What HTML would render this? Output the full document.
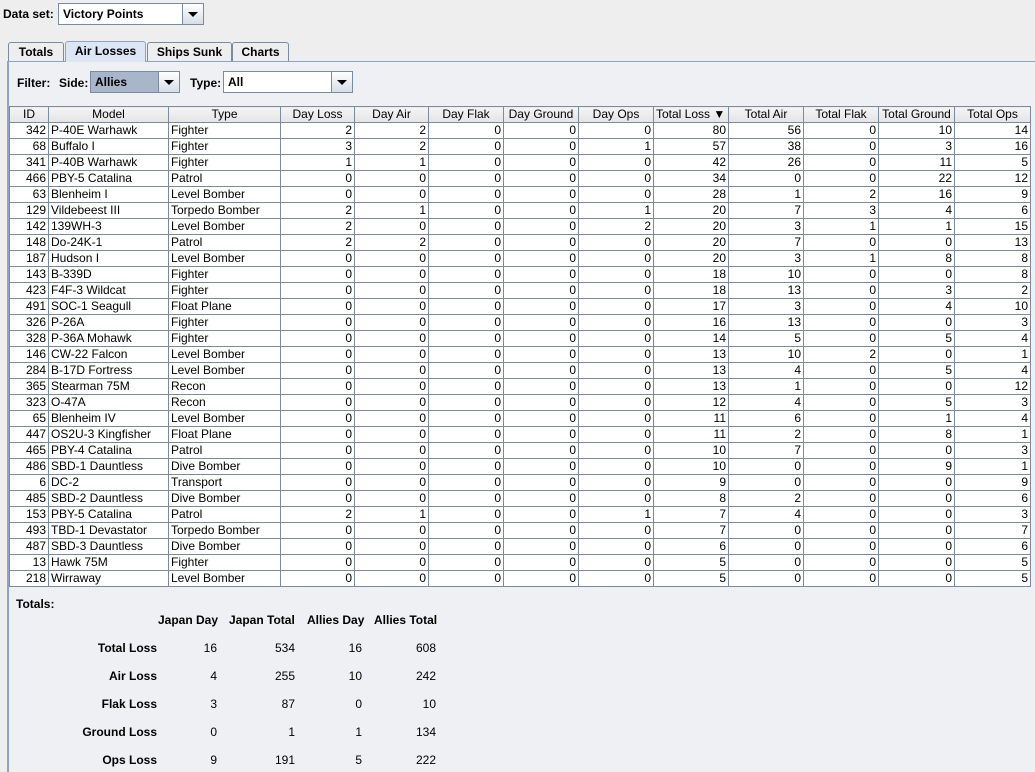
<!DOCTYPE html>
<html><head><meta charset="utf-8"><style>
body{margin:0;width:1035px;height:767px;overflow:hidden;background:#eeeeee;font-family:"Liberation Sans",sans-serif;font-size:12px;color:#000;position:relative}
.a{position:absolute}
.b{font-weight:bold}
.combo{position:absolute;border:1px solid #7a8aa0;background:#fff;height:22px;box-sizing:border-box}
.combo .btn{position:absolute;right:0;top:0;width:20px;height:20px;border-left:1px solid #7a8aa0;background:linear-gradient(#fff,#d8dde6)}
.combo .btn:after{content:"";position:absolute;left:5px;top:8px;border-left:5px solid transparent;border-right:5px solid transparent;border-top:5px solid #000}
.combo span{position:absolute;left:4px;top:3px;font-weight:bold}
.tab{position:absolute;top:42px;height:19px;border:1px solid #7a8aa0;border-bottom:none;border-radius:3px 3px 0 0;background:#eeeeee;font-weight:bold;text-align:center;line-height:18px;box-sizing:border-box}
table{position:absolute;left:9px;top:106px;border-collapse:collapse;table-layout:fixed;background:#fff}
td,th{border:1px solid #7a8aa0;height:15px;padding:0 2px;font-weight:normal;white-space:nowrap;overflow:hidden;line-height:15px;font-size:12px}
th{background:linear-gradient(#f4f4f4,#e4e4e4);text-align:center}
td{text-align:right}
td.l{text-align:left}
.tot{position:absolute;text-align:right;width:60px}
</style></head><body>
<div class="a b" style="left:3px;top:7px">Data set:</div>
<div class="combo" style="left:58px;top:3px;width:146px"><span>Victory Points</span><div class="btn"></div></div>
<div class="a" style="left:7px;top:61px;width:1030px;height:710px;border-left:2px solid #8fa3c8;border-top:1px solid #8fa3c8;background:#eef0f3"></div>
<div class="tab" style="left:8px;width:56px">Totals</div>
<div class="tab" style="left:65px;width:81px;top:41px;height:21px;background:#dce6f4;border-color:#8fa3c8">Air Losses</div>
<div class="tab" style="left:147px;width:85px">Ships Sunk</div>
<div class="tab" style="left:232px;width:57px">Charts</div>
<div class="a b" style="left:17px;top:76px">Filter:</div>
<div class="a b" style="left:59px;top:76px">Side:</div>
<div class="combo" style="left:90px;top:71px;width:90px;background:#a9b5c8"><span>Allies</span><div class="btn"></div></div>
<div class="a b" style="left:190px;top:76px">Type:</div>
<div class="combo" style="left:223px;top:71px;width:130px"><span>All</span><div class="btn"></div></div>
<table>
<colgroup><col style="width:39px"><col style="width:120px"><col style="width:112px"><col style="width:74px"><col style="width:74px"><col style="width:75px"><col style="width:75px"><col style="width:75px"><col style="width:75px"><col style="width:75px"><col style="width:75px"><col style="width:76px"><col style="width:76px"></colgroup>
<tr><th>ID</th><th>Model</th><th>Type</th><th>Day Loss</th><th>Day Air</th><th>Day Flak</th><th>Day Ground</th><th>Day Ops</th><th style="text-align:left">Total Loss &#9660;</th><th>Total Air</th><th>Total Flak</th><th>Total Ground</th><th>Total Ops</th></tr>
<tr><td>342</td><td class="l">P-40E Warhawk</td><td class="l">Fighter</td><td>2</td><td>2</td><td>0</td><td>0</td><td>0</td><td>80</td><td>56</td><td>0</td><td>10</td><td>14</td></tr>
<tr><td>68</td><td class="l">Buffalo I</td><td class="l">Fighter</td><td>3</td><td>2</td><td>0</td><td>0</td><td>1</td><td>57</td><td>38</td><td>0</td><td>3</td><td>16</td></tr>
<tr><td>341</td><td class="l">P-40B Warhawk</td><td class="l">Fighter</td><td>1</td><td>1</td><td>0</td><td>0</td><td>0</td><td>42</td><td>26</td><td>0</td><td>11</td><td>5</td></tr>
<tr><td>466</td><td class="l">PBY-5 Catalina</td><td class="l">Patrol</td><td>0</td><td>0</td><td>0</td><td>0</td><td>0</td><td>34</td><td>0</td><td>0</td><td>22</td><td>12</td></tr>
<tr><td>63</td><td class="l">Blenheim I</td><td class="l">Level Bomber</td><td>0</td><td>0</td><td>0</td><td>0</td><td>0</td><td>28</td><td>1</td><td>2</td><td>16</td><td>9</td></tr>
<tr><td>129</td><td class="l">Vildebeest III</td><td class="l">Torpedo Bomber</td><td>2</td><td>1</td><td>0</td><td>0</td><td>1</td><td>20</td><td>7</td><td>3</td><td>4</td><td>6</td></tr>
<tr><td>142</td><td class="l">139WH-3</td><td class="l">Level Bomber</td><td>2</td><td>0</td><td>0</td><td>0</td><td>2</td><td>20</td><td>3</td><td>1</td><td>1</td><td>15</td></tr>
<tr><td>148</td><td class="l">Do-24K-1</td><td class="l">Patrol</td><td>2</td><td>2</td><td>0</td><td>0</td><td>0</td><td>20</td><td>7</td><td>0</td><td>0</td><td>13</td></tr>
<tr><td>187</td><td class="l">Hudson I</td><td class="l">Level Bomber</td><td>0</td><td>0</td><td>0</td><td>0</td><td>0</td><td>20</td><td>3</td><td>1</td><td>8</td><td>8</td></tr>
<tr><td>143</td><td class="l">B-339D</td><td class="l">Fighter</td><td>0</td><td>0</td><td>0</td><td>0</td><td>0</td><td>18</td><td>10</td><td>0</td><td>0</td><td>8</td></tr>
<tr><td>423</td><td class="l">F4F-3 Wildcat</td><td class="l">Fighter</td><td>0</td><td>0</td><td>0</td><td>0</td><td>0</td><td>18</td><td>13</td><td>0</td><td>3</td><td>2</td></tr>
<tr><td>491</td><td class="l">SOC-1 Seagull</td><td class="l">Float Plane</td><td>0</td><td>0</td><td>0</td><td>0</td><td>0</td><td>17</td><td>3</td><td>0</td><td>4</td><td>10</td></tr>
<tr><td>326</td><td class="l">P-26A</td><td class="l">Fighter</td><td>0</td><td>0</td><td>0</td><td>0</td><td>0</td><td>16</td><td>13</td><td>0</td><td>0</td><td>3</td></tr>
<tr><td>328</td><td class="l">P-36A Mohawk</td><td class="l">Fighter</td><td>0</td><td>0</td><td>0</td><td>0</td><td>0</td><td>14</td><td>5</td><td>0</td><td>5</td><td>4</td></tr>
<tr><td>146</td><td class="l">CW-22 Falcon</td><td class="l">Level Bomber</td><td>0</td><td>0</td><td>0</td><td>0</td><td>0</td><td>13</td><td>10</td><td>2</td><td>0</td><td>1</td></tr>
<tr><td>284</td><td class="l">B-17D Fortress</td><td class="l">Level Bomber</td><td>0</td><td>0</td><td>0</td><td>0</td><td>0</td><td>13</td><td>4</td><td>0</td><td>5</td><td>4</td></tr>
<tr><td>365</td><td class="l">Stearman 75M</td><td class="l">Recon</td><td>0</td><td>0</td><td>0</td><td>0</td><td>0</td><td>13</td><td>1</td><td>0</td><td>0</td><td>12</td></tr>
<tr><td>323</td><td class="l">O-47A</td><td class="l">Recon</td><td>0</td><td>0</td><td>0</td><td>0</td><td>0</td><td>12</td><td>4</td><td>0</td><td>5</td><td>3</td></tr>
<tr><td>65</td><td class="l">Blenheim IV</td><td class="l">Level Bomber</td><td>0</td><td>0</td><td>0</td><td>0</td><td>0</td><td>11</td><td>6</td><td>0</td><td>1</td><td>4</td></tr>
<tr><td>447</td><td class="l">OS2U-3 Kingfisher</td><td class="l">Float Plane</td><td>0</td><td>0</td><td>0</td><td>0</td><td>0</td><td>11</td><td>2</td><td>0</td><td>8</td><td>1</td></tr>
<tr><td>465</td><td class="l">PBY-4 Catalina</td><td class="l">Patrol</td><td>0</td><td>0</td><td>0</td><td>0</td><td>0</td><td>10</td><td>7</td><td>0</td><td>0</td><td>3</td></tr>
<tr><td>486</td><td class="l">SBD-1 Dauntless</td><td class="l">Dive Bomber</td><td>0</td><td>0</td><td>0</td><td>0</td><td>0</td><td>10</td><td>0</td><td>0</td><td>9</td><td>1</td></tr>
<tr><td>6</td><td class="l">DC-2</td><td class="l">Transport</td><td>0</td><td>0</td><td>0</td><td>0</td><td>0</td><td>9</td><td>0</td><td>0</td><td>0</td><td>9</td></tr>
<tr><td>485</td><td class="l">SBD-2 Dauntless</td><td class="l">Dive Bomber</td><td>0</td><td>0</td><td>0</td><td>0</td><td>0</td><td>8</td><td>2</td><td>0</td><td>0</td><td>6</td></tr>
<tr><td>153</td><td class="l">PBY-5 Catalina</td><td class="l">Patrol</td><td>2</td><td>1</td><td>0</td><td>0</td><td>1</td><td>7</td><td>4</td><td>0</td><td>0</td><td>3</td></tr>
<tr><td>493</td><td class="l">TBD-1 Devastator</td><td class="l">Torpedo Bomber</td><td>0</td><td>0</td><td>0</td><td>0</td><td>0</td><td>7</td><td>0</td><td>0</td><td>0</td><td>7</td></tr>
<tr><td>487</td><td class="l">SBD-3 Dauntless</td><td class="l">Dive Bomber</td><td>0</td><td>0</td><td>0</td><td>0</td><td>0</td><td>6</td><td>0</td><td>0</td><td>0</td><td>6</td></tr>
<tr><td>13</td><td class="l">Hawk 75M</td><td class="l">Fighter</td><td>0</td><td>0</td><td>0</td><td>0</td><td>0</td><td>5</td><td>0</td><td>0</td><td>0</td><td>5</td></tr>
<tr><td>218</td><td class="l">Wirraway</td><td class="l">Level Bomber</td><td>0</td><td>0</td><td>0</td><td>0</td><td>0</td><td>5</td><td>0</td><td>0</td><td>0</td><td>5</td></tr>
</table>
<div class="a b" style="left:16px;top:597px">Totals:</div>
<div class="a b" style="left:158px;top:613px">Japan Day</div>
<div class="a b" style="left:229px;top:613px">Japan Total</div>
<div class="a b" style="left:307px;top:613px">Allies Day</div>
<div class="a b" style="left:374px;top:613px">Allies Total</div>

<div class="tot b" style="left:97px;top:641px">Total Loss</div>
<div class="tot" style="left:157px;top:641px">16</div><div class="tot" style="left:235px;top:641px">534</div><div class="tot" style="left:302px;top:641px">16</div><div class="tot" style="left:376px;top:641px">608</div>
<div class="tot b" style="left:97px;top:669px">Air Loss</div>
<div class="tot" style="left:157px;top:669px">4</div><div class="tot" style="left:235px;top:669px">255</div><div class="tot" style="left:302px;top:669px">10</div><div class="tot" style="left:376px;top:669px">242</div>
<div class="tot b" style="left:97px;top:697px">Flak Loss</div>
<div class="tot" style="left:157px;top:697px">3</div><div class="tot" style="left:235px;top:697px">87</div><div class="tot" style="left:302px;top:697px">0</div><div class="tot" style="left:376px;top:697px">10</div>
<div class="tot b" style="left:57px;top:725px;width:100px">Ground Loss</div>
<div class="tot" style="left:157px;top:725px">0</div><div class="tot" style="left:235px;top:725px">1</div><div class="tot" style="left:302px;top:725px">1</div><div class="tot" style="left:376px;top:725px">134</div>
<div class="tot b" style="left:97px;top:753px">Ops Loss</div>
<div class="tot" style="left:157px;top:753px">9</div><div class="tot" style="left:235px;top:753px">191</div><div class="tot" style="left:302px;top:753px">5</div><div class="tot" style="left:376px;top:753px">222</div>
</body></html>
